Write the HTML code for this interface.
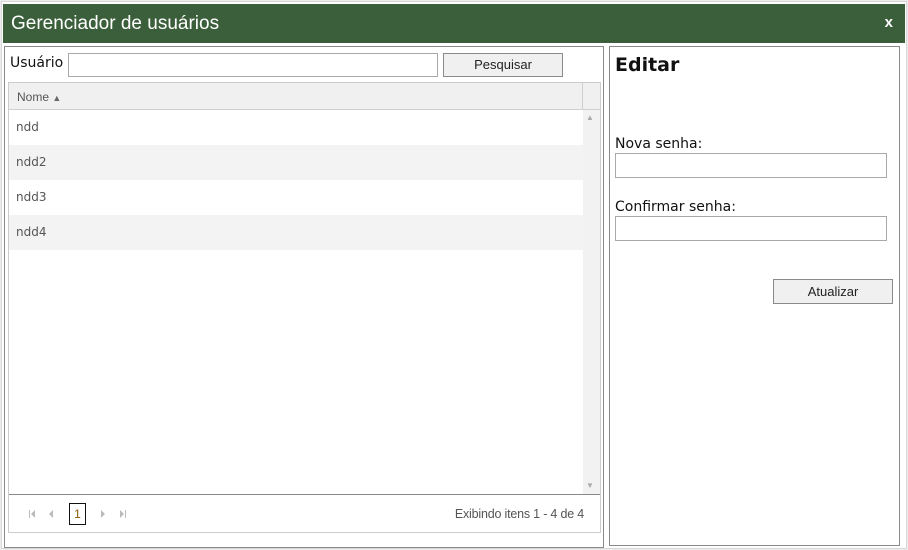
<!DOCTYPE html>
<html><head><meta charset="utf-8"><style>
*{box-sizing:border-box;margin:0;padding:0}
body{width:908px;height:550px;background:#ececec;position:relative;overflow:hidden;font-family:"Liberation Sans",sans-serif}
.a{position:absolute}
.win{left:1px;top:1px;width:906px;height:548px;background:#fff;border:1px solid #d8d8d8}
.title{left:3px;top:4px;width:902px;height:39px;background:#3b5f3b;color:#fff;font-size:19px;line-height:39px;padding-left:8px}
.x{right:12px;top:0;font-weight:bold;font-size:15px;line-height:37px}
.panel{border:1px solid #8a8a8a;background:#fff}
.dv{font-family:"DejaVu Sans",sans-serif}
input{border:1px solid #a9a9a9;background:#fff}
.btn{border:1px solid #8a8a8a;background:#f0f0f0;font-size:13px;text-align:center;color:#222}
.row{left:0;width:574px;height:35px;font-size:12px;color:#555;padding-left:7px;line-height:35px;font-family:"DejaVu Sans",sans-serif}
.tri{position:absolute;width:0;height:0;border-top:4px solid transparent;border-bottom:4px solid transparent}
.bar{position:absolute;width:1px;height:8px;background:#bbb}
</style></head><body>
<div class="a win"></div>
<div class="a title">Gerenciador de usuários<span class="a x">x</span></div>
<div class="a panel" style="left:4px;top:46px;width:600px;height:502px"></div>
<div class="a dv" style="left:10px;top:55px;font-size:14px;color:#111">Usuário</div>
<input class="a" style="left:68px;top:53px;width:370px;height:24px">
<div class="a btn" style="left:443px;top:53px;width:120px;height:24px;line-height:22px">Pesquisar</div>
<div class="a" style="left:8px;top:82px;width:593px;height:451px;border:1px solid #ccc;background:#fff"></div>
<div class="a" style="left:9px;top:83px;width:591px;height:27px;background:#f0f0f0;border-bottom:1px solid #d0d0d0"></div>
<div class="a" style="left:582px;top:83px;width:1px;height:27px;background:#d0d0d0"></div>
<div class="a" style="left:17px;top:90px;font-size:12px;color:#555">Nome <span style="font-size:9px;color:#666">▲</span></div>
<div class="a" style="left:9px;top:110px;width:574px;height:385px">
<div class="a row" style="top:0">ndd</div>
<div class="a row" style="top:35px;background:#f3f3f3">ndd2</div>
<div class="a row" style="top:70px">ndd3</div>
<div class="a row" style="top:105px;background:#f3f3f3">ndd4</div>
</div>
<div class="a" style="left:583px;top:110px;width:17px;height:385px;background:#f2f2f2"></div>
<div class="a" style="left:586px;top:113px;font-size:8px;color:#aaa">▲</div>
<div class="a" style="left:586px;top:481px;font-size:8px;color:#aaa">▼</div>
<div class="a" style="left:9px;top:494px;width:591px;height:1px;background:#888"></div>
<div class="bar" style="left:29px;top:510px"></div>
<div class="tri" style="left:31px;top:510px;border-right:4px solid #bbb"></div>
<div class="tri" style="left:49px;top:510px;border-right:4px solid #bbb"></div>
<div class="a" style="left:69px;top:503px;width:17px;height:22px;border:1px solid #111;font-size:12px;color:#8a5a00;text-align:center;line-height:20px">1</div>
<div class="tri" style="left:101px;top:510px;border-left:4px solid #bbb"></div>
<div class="tri" style="left:120px;top:510px;border-left:4px solid #bbb"></div>
<div class="bar" style="left:125px;top:510px"></div>
<div class="a" style="right:324px;top:507px;font-size:12.5px;color:#555;letter-spacing:-0.2px">Exibindo itens 1 - 4 de 4</div>
<div class="a panel" style="left:609px;top:46px;width:291px;height:500px"></div>
<div class="a dv" style="left:615px;top:54px;font-size:19px;font-weight:bold;color:#111">Editar</div>
<div class="a dv" style="left:615px;top:136px;font-size:14px;color:#111">Nova senha:</div>
<input class="a" style="left:615px;top:153px;width:272px;height:25px">
<div class="a dv" style="left:615px;top:199px;font-size:14px;color:#111">Confirmar senha:</div>
<input class="a" style="left:615px;top:216px;width:272px;height:25px">
<div class="a btn" style="left:773px;top:279px;width:120px;height:25px;line-height:23px">Atualizar</div>
</body></html>
